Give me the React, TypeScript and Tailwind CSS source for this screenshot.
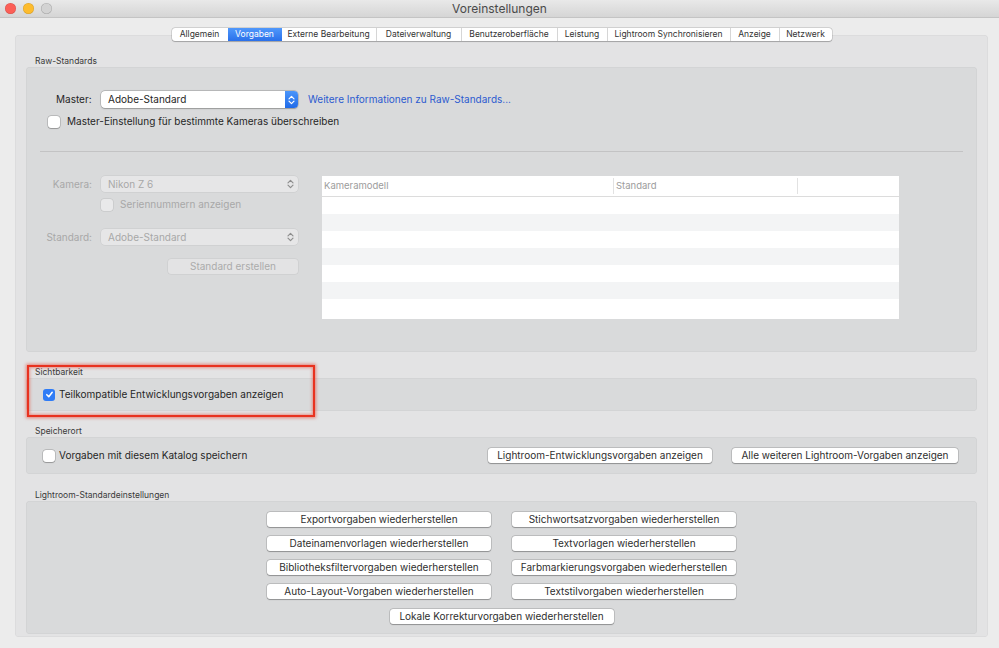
import React from "react";

const tabs: [string, string][] = [
  ["Allgemein", "w-[56px]"],
  ["Vorgaben", "w-[54px]"],
  ["Externe Bearbeitung", "w-[94px]"],
  ["Dateiverwaltung", "w-[85px]"],
  ["Benutzeroberfläche", "w-[96px]"],
  ["Leistung", "w-[50px]"],
  ["Lightroom Synchronisieren", "w-[123px]"],
  ["Anzeige", "w-[49px]"],
  ["Netzwerk", "w-[53px]"],
];

const Checkbox = ({ checked, disabled }: { checked?: boolean; disabled?: boolean }) =>
  checked ? (
    <span className="flex h-[12px] w-[12px] shrink-0 items-center justify-center rounded-[3px] bg-[#2f7cf6]">
      <svg width="9" height="9" viewBox="0 0 10 10" fill="none">
        <path d="M2 5.2 L4.2 7.5 L8 2.5" stroke="white" strokeWidth="1.7" strokeLinecap="round" strokeLinejoin="round" />
      </svg>
    </span>
  ) : (
    <span
      className={
        disabled
          ? "block h-[12px] w-[12px] shrink-0 rounded-[3px] bg-[#e9e9ea] shadow-[0_0_0_0.5px_rgba(0,0,0,0.12)]"
          : "block h-[12px] w-[12px] shrink-0 rounded-[3px] bg-white shadow-[0_0_0_0.5px_rgba(0,0,0,0.25),0_0.5px_1px_rgba(0,0,0,0.2)]"
      }
    />
  );

const Chevrons = ({ color }: { color: string }) => (
  <svg width="7" height="10" viewBox="0 0 7 10" fill="none">
    <path d="M1 3.8 L3.5 1.3 L6 3.8" stroke={color} strokeWidth="1.2" strokeLinecap="round" strokeLinejoin="round" />
    <path d="M1 6.2 L3.5 8.7 L6 6.2" stroke={color} strokeWidth="1.2" strokeLinecap="round" strokeLinejoin="round" />
  </svg>
);

const Popup = ({ value, disabled }: { value: string; disabled?: boolean }) =>
  disabled ? (
    <div className="flex h-[16px] w-[197px] items-center justify-between rounded-[4px] bg-[#e6e6e7] pl-[7px] pr-[4px] text-[10px] text-[#a8a8a8] shadow-[0_0_0_0.5px_rgba(0,0,0,0.08)]">
      <span>{value}</span>
      <Chevrons color="#8e8e8e" />
    </div>
  ) : (
    <div className="flex h-[17px] w-[197px] items-center justify-between rounded-[4px] bg-white pl-[7px] text-[10px] text-[#262626] shadow-[0_0_0_0.5px_rgba(0,0,0,0.25),0_0.5px_1.5px_rgba(0,0,0,0.2)]">
      <span>{value}</span>
      <span className="flex h-[17px] w-[13px] items-center justify-center rounded-r-[4px] bg-gradient-to-b from-[#4a95fa] to-[#1f6ae8]">
        <Chevrons color="white" />
      </span>
    </div>
  );

const Btn = ({ label, w, disabled }: { label: string; w: string; disabled?: boolean }) => (
  <div
    className={
      (disabled
        ? "bg-[#e3e3e4] text-[#ababab] shadow-[0_0_0_0.5px_rgba(0,0,0,0.08)] "
        : "bg-white text-[#2e2e2e] shadow-[0_0_0_0.5px_rgba(0,0,0,0.22),0_0.5px_1px_rgba(0,0,0,0.25)] ") +
      w +
      " flex h-[15px] items-center justify-center whitespace-nowrap rounded-[3px] text-[10px]"
    }
  >
    {label}
  </div>
);

const SectionLabel = ({ text }: { text: string }) => (
  <div className="h-[12px] pl-[9px] text-[8.5px] leading-[12px] text-[#3a3a3a]">{text}</div>
);

const Panel = ({ h, children }: { h: string; children?: React.ReactNode }) => (
  <div className={h + " rounded-[4px] bg-[#d9dadb] shadow-[inset_0_0_0_0.5px_rgba(0,0,0,0.06)]"}>{children}</div>
);

export default function App() {
  return (
    <div
      className="relative h-[648px] w-[999px] overflow-hidden bg-[#ececec] text-[#262626]"
      style={{ fontFamily: "Inter, 'Liberation Sans', sans-serif" }}
    >
      {/* title bar */}
      <div className="relative flex h-[18px] items-center border-b border-[#c4c4c4] bg-gradient-to-b from-[#e9e9e9] to-[#d5d5d5]">
        <div className="flex items-center gap-[7px] pl-[5px]">
          <span className="h-[11px] w-[11px] rounded-full bg-[#fc5f57] shadow-[inset_0_0_0_0.5px_rgba(0,0,0,0.15)]" />
          <span className="h-[11px] w-[11px] rounded-full bg-[#fdbc2e] shadow-[inset_0_0_0_0.5px_rgba(0,0,0,0.15)]" />
          <span className="h-[11px] w-[11px] rounded-full bg-[#d3d3d3] shadow-[inset_0_0_0_0.5px_rgba(0,0,0,0.2)]" />
        </div>
        <div className="absolute inset-0 flex items-center justify-center text-[12px] text-[#4a4a4a]">Voreinstellungen</div>
      </div>

      <div className="pl-[15px] pr-[11px]">
        {/* tabs */}
        <div className="relative z-10 mt-[10px] flex h-[13px] justify-center">
          <div className="flex rounded-[3px] bg-white shadow-[0_0_0_0.5px_rgba(0,0,0,0.2),0_0.5px_1px_rgba(0,0,0,0.2)]">
            {tabs.map(([t, w], i) => (
              <div
                key={t}
                className={
                  t === "Vorgaben"
                    ? w + " flex h-[13px] items-center justify-center bg-gradient-to-b from-[#5098fb] to-[#2a70ea] text-[8.5px] text-white"
                    : w +
                      " flex h-[13px] items-center justify-center whitespace-nowrap text-[8.5px] text-[#333] " +
                      (i > 0 && tabs[i - 1][0] !== "Vorgaben" ? "border-l border-[#d6d6d6]" : "")
                }
              >
                {t}
              </div>
            ))}
          </div>
        </div>

        {/* outer tab box */}
        <div className="-mt-[6px] h-[602px] rounded-[4px] bg-[#e3e3e4] px-[11px] shadow-[inset_0_0_0_0.5px_rgba(0,0,0,0.06)]">
          {/* Raw-Standards */}
          <div className="pt-[20px]">
            <SectionLabel text="Raw-Standards" />
            <Panel h="h-[285px]">
              <div className="flex items-center pl-[30px] pt-[24px] text-[10px]">
                <span className="w-[36px]">Master:</span>
                <div className="ml-[9px]">
                  <Popup value="Adobe-Standard" />
                </div>
                <span className="ml-[10px] text-[#2c5bd0]">Weitere Informationen zu Raw-Standards...</span>
              </div>
              <div className="mt-[6px] flex items-center gap-[7px] pl-[22px] text-[10px]">
                <Checkbox />
                <span>Master-Einstellung für bestimmte Kameras überschreiben</span>
              </div>
              <div className="mx-[14px] mt-[22px] h-px bg-[#c3c3c4]" />
              <div className="mt-[24px] flex">
                <div className="flex w-[272px] flex-col text-[10px] text-[#a8a8a8]">
                  <div className="flex items-center">
                    <span className="w-[66px] text-right">Kamera:</span>
                    <div className="ml-[9px]">
                      <Popup value="Nikon Z 6" disabled />
                    </div>
                  </div>
                  <div className="mt-[5px] flex items-center gap-[7px] pl-[75px]">
                    <Checkbox disabled />
                    <span>Seriennummern anzeigen</span>
                  </div>
                  <div className="mt-[17px] flex items-center">
                    <span className="w-[66px] text-right">Standard:</span>
                    <div className="ml-[9px]">
                      <Popup value="Adobe-Standard" disabled />
                    </div>
                  </div>
                  <div className="mt-[14px] flex justify-end">
                    <Btn label="Standard erstellen" w="w-[130px]" disabled />
                  </div>
                </div>
                <div className="ml-[24px] flex h-[143px] w-[577px] flex-col bg-white text-[9.5px] text-[#9c9c9c]">
                  <div className="flex h-[21px] items-center border-b border-[#dcdcdc]">
                    <span className="w-[291px] pl-[2px]">Kameramodell</span>
                    <span className="h-[16px] w-px bg-[#e2e2e2]" />
                    <span className="w-[183px] pl-[2px]">Standard</span>
                    <span className="h-[16px] w-px bg-[#e2e2e2]" />
                  </div>
                  <div className="h-[17px]" />
                  <div className="h-[17px] bg-[#f3f4f5]" />
                  <div className="h-[17px]" />
                  <div className="h-[17px] bg-[#f3f4f5]" />
                  <div className="h-[17px]" />
                  <div className="h-[17px] bg-[#f3f4f5]" />
                  <div className="h-[17px]" />
                </div>
              </div>
            </Panel>
          </div>

          {/* Sichtbarkeit */}
          <div className="relative mt-[14px]">
            <SectionLabel text="Sichtbarkeit" />
            <Panel h="h-[33px]">
              <div className="flex h-[33px] items-center gap-[4px] pl-[17px] text-[10px]">
                <Checkbox checked />
                <span>Teilkompatible Entwicklungsvorgaben anzeigen</span>
              </div>
            </Panel>
            <div className="pointer-events-none absolute -top-[1px] left-[1px] h-[52px] w-[288px] border-[2.5px] border-[#e8321f] shadow-[0_0_3px_1px_rgba(232,50,31,0.55),inset_0_0_3px_1px_rgba(232,50,31,0.45)]" />
          </div>

          {/* Speicherort */}
          <div className="mt-[14px]">
            <SectionLabel text="Speicherort" />
            <Panel h="h-[37px]">
              <div className="flex h-[37px] items-center pl-[17px] pr-[19px] text-[10px]">
                <Checkbox />
                <span className="ml-[4px]">Vorgaben mit diesem Katalog speichern</span>
                <div className="ml-auto flex gap-[20px]">
                  <Btn label="Lightroom-Entwicklungsvorgaben anzeigen" w="w-[224px]" />
                  <Btn label="Alle weiteren Lightroom-Vorgaben anzeigen" w="w-[226px]" />
                </div>
              </div>
            </Panel>
          </div>

          {/* Lightroom-Standardeinstellungen */}
          <div className="mt-[15px]">
            <SectionLabel text="Lightroom-Standardeinstellungen" />
            <Panel h="h-[133px]">
              <div className="flex flex-col items-center pt-[11px]">
                <div className="grid grid-cols-[224px_224px] gap-x-[21px] gap-y-[9px]">
                  <Btn label="Exportvorgaben wiederherstellen" w="w-[224px]" />
                  <Btn label="Stichwortsatzvorgaben wiederherstellen" w="w-[224px]" />
                  <Btn label="Dateinamenvorlagen wiederherstellen" w="w-[224px]" />
                  <Btn label="Textvorlagen wiederherstellen" w="w-[224px]" />
                  <Btn label="Bibliotheksfiltervorgaben wiederherstellen" w="w-[224px]" />
                  <Btn label="Farbmarkierungsvorgaben wiederherstellen" w="w-[224px]" />
                  <Btn label="Auto-Layout-Vorgaben wiederherstellen" w="w-[224px]" />
                  <Btn label="Textstilvorgaben wiederherstellen" w="w-[224px]" />
                </div>
                <div className="mt-[10px]">
                  <Btn label="Lokale Korrekturvorgaben wiederherstellen" w="w-[224px]" />
                </div>
              </div>
            </Panel>
          </div>
        </div>
      </div>
    </div>
  );
}
